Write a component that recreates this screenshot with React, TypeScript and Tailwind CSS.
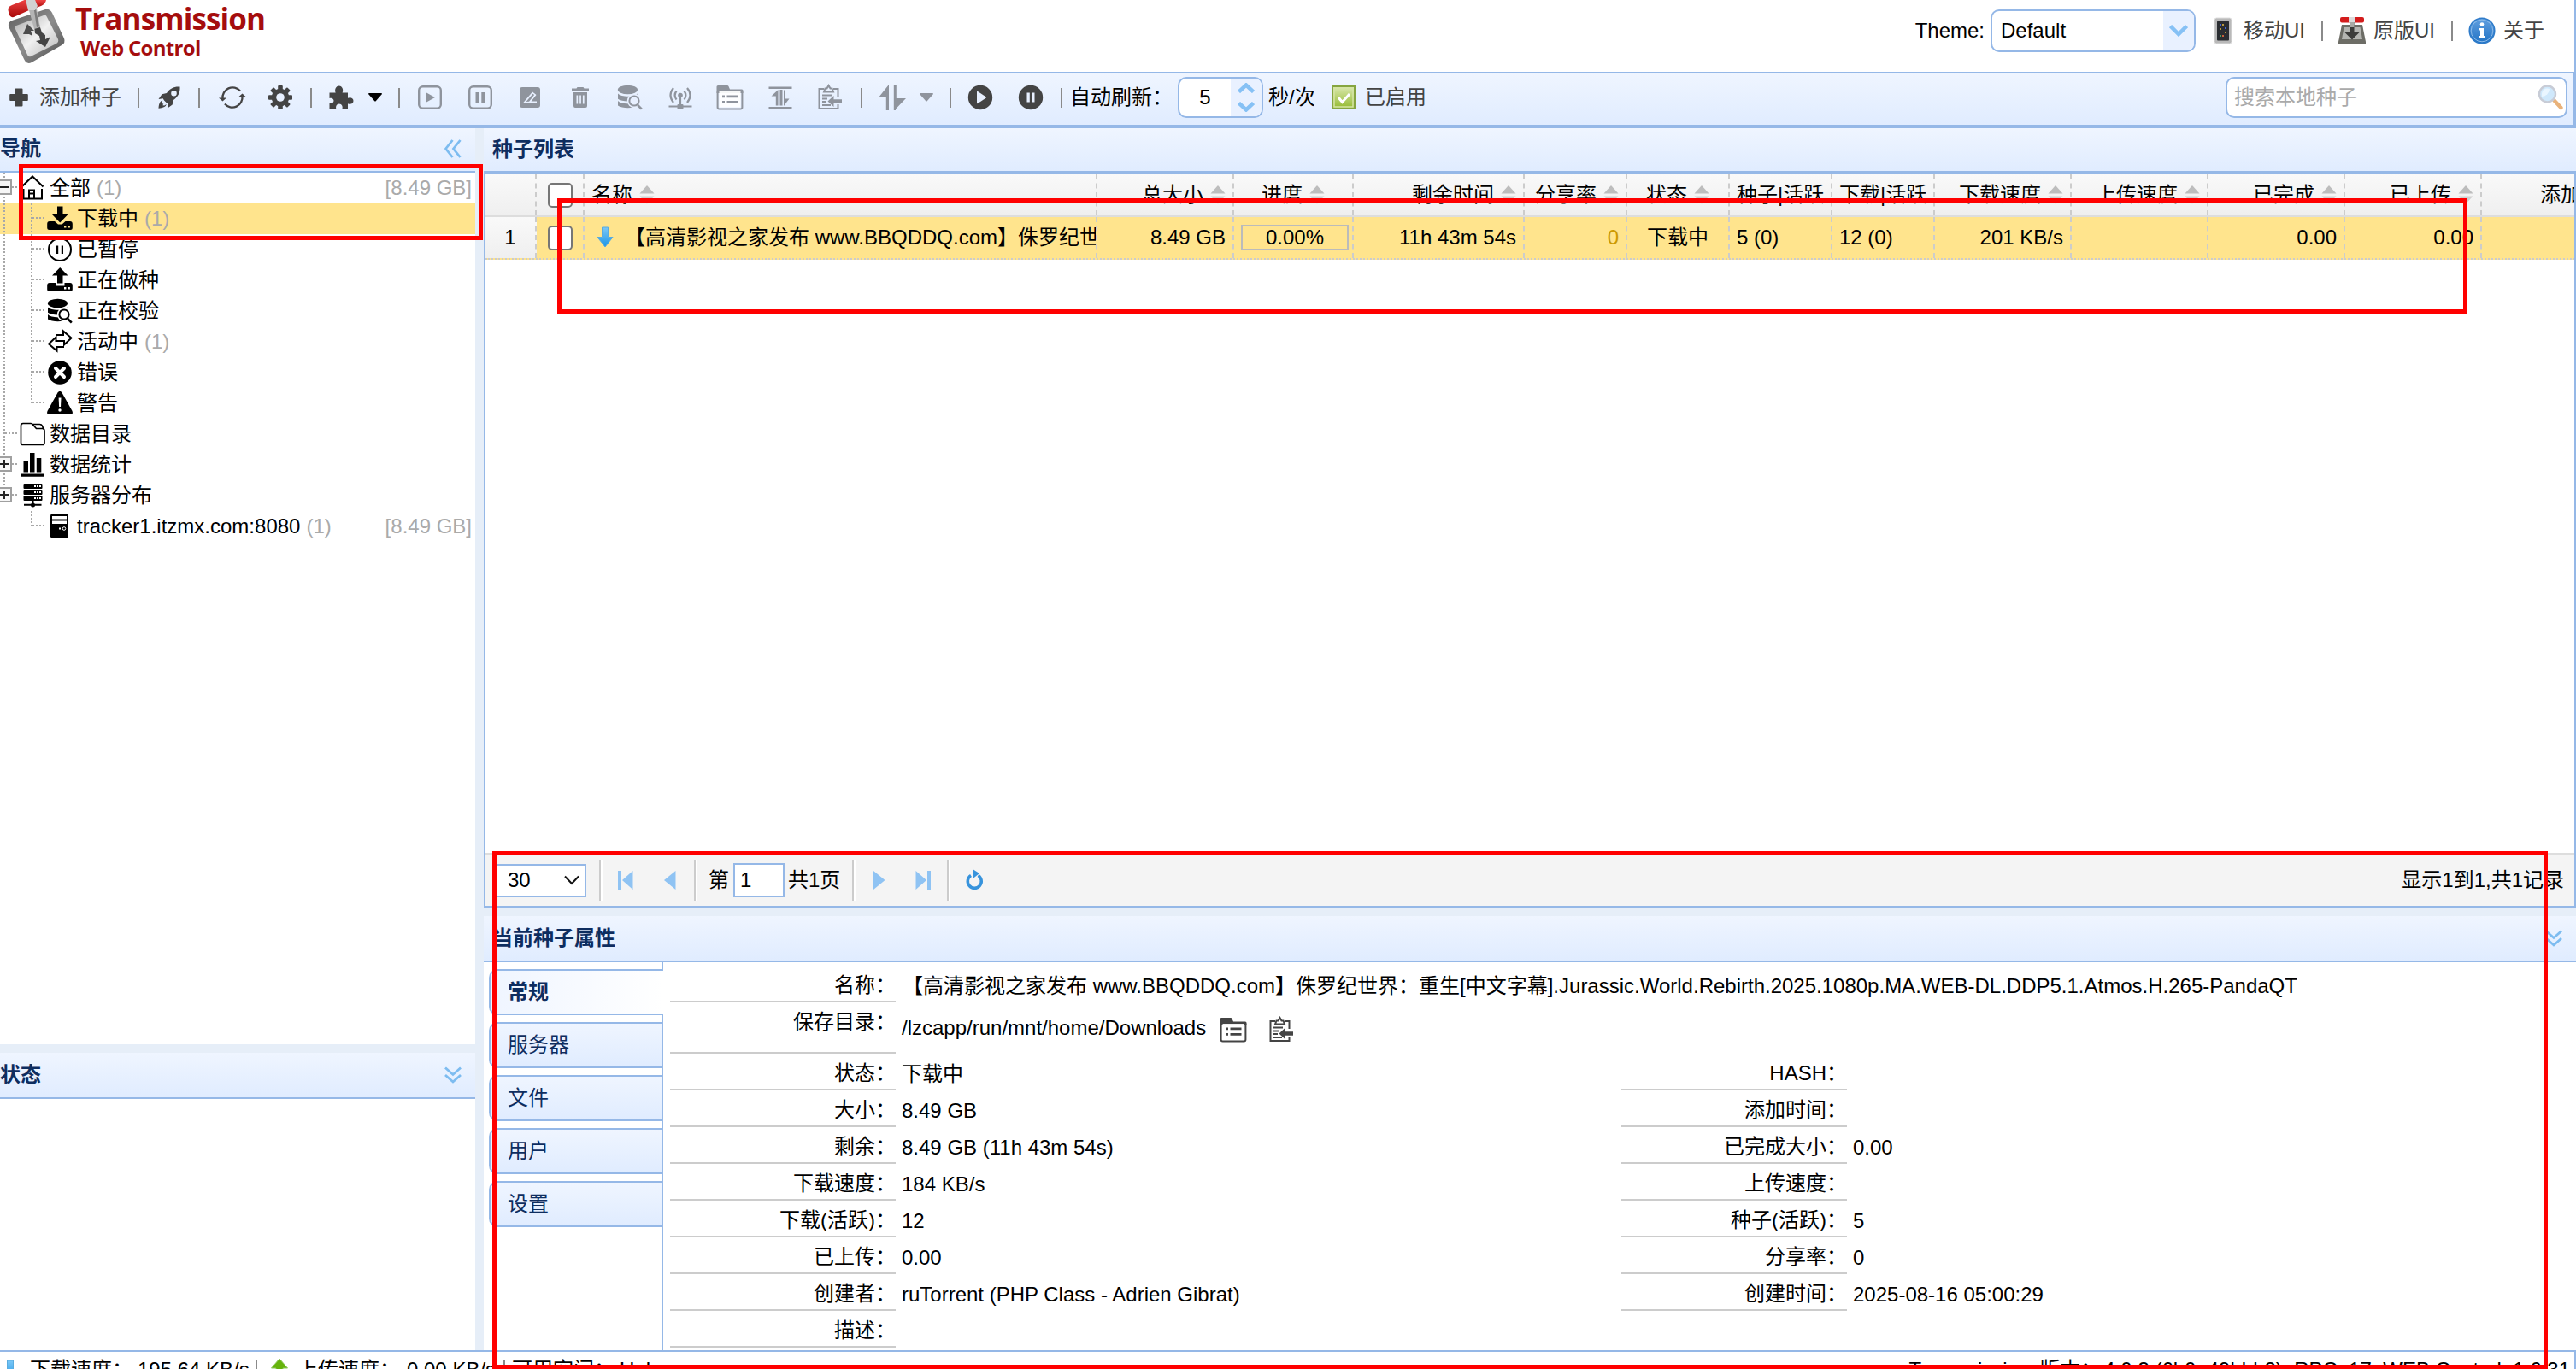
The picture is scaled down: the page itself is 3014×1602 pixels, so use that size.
import React from 'react';

type IconProps = { className?: string };

/* ---------- icons (32 x 32 grid) ---------- */

const Svg: React.FC<React.PropsWithChildren<IconProps>> = ({ className = '', children }) => (
  <svg viewBox="0 0 32 32" fill="currentColor" className={`block size-8 shrink-0 ${className}`}>
    {children}
  </svg>
);

const PlusIcon = () => (
  <Svg>
    <path d="M12.5 5.5h7a1 1 0 0 1 1 1V12h5.300a1 1 0 0 1 1 1v6a1 1 0 0 1-1 1H20.500v5.500a1 1 0 0 1-1 1h-7a1 1 0 0 1-1-1V20H6.200a1 1 0 0 1-1-1v-6a1 1 0 0 1 1-1h5.300V6.500a1 1 0 0 1 1-1z" />
  </Svg>
);

const RocketIcon = () => (
  <Svg>
    <path
      fillRule="evenodd"
      d="M28.500 3.500c-6.500-.6-12 2-15.500 7.500l-5.500 1.200L3.500 18l5.200-.8 1.300 2.200 2.600 2.600 2.300 1.300-.9 5.200 5.700-4.100 1.300-5.500c5.500-3.700 8-9 7.500-15.400zM21.500 8a3.300 3.300 0 1 1 0 6.600 3.300 3.300 0 0 1 0-6.600z"
    />
    <path d="M8.200 19.500c-3 .6-4.400 4.200-4.700 9.300 5-.3 8.600-1.700 9.200-4.700l-2.400 1.400-1.900-.3.900-2-1.900.2z" />
  </Svg>
);

const SyncIcon = () => (
  <Svg>
    <g fill="none" stroke="currentColor" strokeWidth="2.300">
      <path d="M4.500 17.500A11.700 11.700 0 0 1 25 8.500" />
      <path d="M27.500 14.500A11.700 11.700 0 0 1 7 23.500" />
    </g>
    <path d="M0 16.500h9L4.500 20.500zM32 15.500h-9l4.500-4z" />
  </Svg>
);

const GearIcon = () => (
  <Svg>
    <g>
      {[0, 45, 90, 135].map((a) => (
        <rect key={a} x="13.200" y="2" width="5.600" height="28" rx="1" transform={`rotate(${a} 16 16)`} />
      ))}
    </g>
    <circle cx="16" cy="16" r="10.300" />
    <circle cx="16" cy="16" r="4.800" fill="#e8f0ff" />
  </Svg>
);

const PuzzleIcon = () => (
  <Svg>
    <path d="M2.500 10.500h7.200c-1.500-3.400.2-8 4-8s5.500 4.600 3.900 8h6.400v6.300c2.300-1.200 6.500-.6 6.500 3.200s-4.200 4.500-6.500 3.300v6.200h-6.700c1.200-2.600-.4-6-3.400-6s-4.600 3.400-3.400 6H2.500v-7c2.600 1.200 5-.4 5-2.700s-2.400-3.900-5-2.700z" />
  </Svg>
);

const CaretDown: React.FC<IconProps> = ({ className = '' }) => (
  <svg viewBox="0 0 16 10" fill="currentColor" className={`block h-2.5 w-4 shrink-0 ${className}`}>
    <path d="M0 1Q0 0 1 0h14q1 0 1 1L8.500 9.500h-1z" />
  </svg>
);

const PlayBoxIcon = () => (
  <Svg>
    <rect x="3.200" y="3.200" width="25.600" height="25.600" rx="4.500" fill="none" stroke="currentColor" strokeWidth="2.400" />
    <path d="M12 10.500l10 5.500-10 5.500z" />
  </Svg>
);

const PauseBoxIcon = () => (
  <Svg>
    <rect x="3.200" y="3.200" width="25.600" height="25.600" rx="4.500" fill="none" stroke="currentColor" strokeWidth="2.400" />
    <path d="M10.500 10h4.200v12h-4.200zM17.300 10h4.200v12h-4.200z" />
  </Svg>
);

const EditIcon = () => (
  <Svg>
    <rect x="4" y="4" width="24" height="24" rx="3" />
    <path d="M7.500 23L19 9.500l4.500 3.500-6 7.500H24V23z" fill="#e8f0ff" />
    <path d="M11.500 21l8-9.300 1.600 1.300-6 7.700z" />
  </Svg>
);

const TrashIcon = () => (
  <Svg>
    <path d="M12.500 4h7l1 1.500H26v3H6v-3h5.500z" />
    <path fillRule="evenodd" d="M8 10h16v16q0 2-2 2H10q-2 0-2-2zm3.500 3.500v10h1.700v-10zm3.700 0v10h1.700v-10zm3.700 0v10h1.700v-10z" />
  </Svg>
);

const DbSearchIcon: React.FC<{ bg?: string }> = ({ bg = '#e8f0ff' }) => (
  <Svg>
    <ellipse cx="13.500" cy="7" rx="11.700" ry="5.200" />
    <path d="M2 11.500c4 4.300 19 4.300 23 0v6.300c-5 3.600-18 3.600-23 0z" />
    <path d="M2 20c4 4.300 19 4.300 23 0v5.500c-5 3.700-18 3.700-23 0z" />
    <circle cx="21" cy="20" r="8.200" fill={bg} />
    <circle cx="21" cy="20" r="5.600" fill="none" stroke="currentColor" strokeWidth="2" />
    <path d="M25.200 25l4.600 4.600" stroke="currentColor" strokeWidth="2.600" />
  </Svg>
);

const BroadcastIcon = () => (
  <Svg>
    <circle cx="16" cy="13.500" r="2.800" />
    <g fill="none" stroke="currentColor" strokeWidth="2.200">
      <path d="M11.500 8.500q-3.800 5 0 10M8 5q-7 8.500 0 17M20.500 8.500q3.800 5 0 10M24 5q7 8.500 0 17" />
      <path d="M16 15v11M2.500 26.500h27" />
    </g>
    <rect x="12.500" y="24" width="7" height="5.500" rx="1" />
  </Svg>
);

const FolderListIcon = () => (
  <Svg>
    <path d="M0.500 9V3.500q0-1.500 1.500-1.500h11q1 0 1.500 1l1.500 3.500h14q1.500 0 1.500 1.500v3H.5z" />
    <rect x="1.600" y="8" width="28.800" height="21.500" rx="2" fill="none" stroke="currentColor" strokeWidth="2" />
    <rect x="3.500" y="9" width="25" height="18.500" fill="#fff" fillOpacity=".92" />
    <path d="M7 13.500h3v2.800H7zM12.500 13.500h13v2.800h-13zM7 20h3v2.800H7zM12.500 20h13v2.800h-13z" />
  </Svg>
);

const MoveIcon = () => (
  <Svg>
    <path d="M2.500 3.500h27V6h-27zM2.500 27h27v2.500h-27zM13.500 7v18.500h-2.700V14.500H5.500zM18.500 25.500V7h-3v18.500zM20 7.500h1.200v10h5.300l-6.500 8.500z" />
  </Svg>
);

const ClipboardIcon = () => (
  <Svg>
    <g fill="none" stroke="currentColor" strokeWidth="2">
      <path d="M9 6H3.500v23h22v-5M25.500 15V6H20" />
      <path d="M9 9.500l1.500-4h2L14.500 2l2 3.500h2l1.500 4z" />
      <path d="M7 13.500h11M7 17.500h6M7 21h5M7 25h10" />
    </g>
    <path d="M13.500 20.500l7-6.500v4.300H30v4.500h-9.500V27z" />
  </Svg>
);

const UpDownIcon = () => (
  <Svg>
    <path d="M12 1v30H8.800V16H0zM17.800 1h3v16H32L20 29.500V31h-2.200z" />
  </Svg>
);

const PlayCircleIcon = () => (
  <Svg>
    <circle cx="16" cy="16" r="14.200" />
    <path d="M12 9.500q0-1 1-.5l9.500 6.300q1 .7 0 1.400L13 23q-1 .5-1-.5z" fill="#e8f0ff" />
  </Svg>
);

const PauseCircleIcon = () => (
  <Svg>
    <circle cx="16" cy="16" r="14.200" />
    <path d="M11.500 10.500h3.300v11h-3.300zM17.200 10.500h3.300v11h-3.300z" fill="#e8f0ff" />
  </Svg>
);

const CheckIcon = () => (
  <svg viewBox="0 0 28 28" className="block size-7 shrink-0">
    <defs>
      <linearGradient id="chk" x1="0" y1="0" x2="0" y2="1">
        <stop offset="0" stopColor="#dbe9b0" />
        <stop offset="1" stopColor="#93b92e" />
      </linearGradient>
    </defs>
    <rect x="1" y="1" width="26" height="26" fill="url(#chk)" stroke="#86a540" strokeWidth="2" />
    <rect x="3" y="3" width="22" height="22" fill="none" stroke="#d5e4a4" strokeWidth="1.500" />
    <path d="M8 14l4.500 5.500L21 10" fill="none" stroke="#fff" strokeWidth="3" />
  </svg>
);

const HomeIcon = () => (
  <Svg>
    <path d="M3.500 14.500L16 2.500l12.500 12M5.500 17v11.500H27V17M12 28V18.500h6V28M12 22.500h6" fill="none" stroke="currentColor" strokeWidth="2" />
  </Svg>
);

const DownloadIcon = () => (
  <Svg>
    <path d="M13 1.500h6.500V11h6L16.200 20.500 7 11h6z" />
    <path fillRule="evenodd" d="M4 19h6l4 3.500h4.500l4-3.500H28q2.800 0 2.800 3v4.500q0 2.500-2.500 2.500H3.700q-2.500 0-2.500-2.500V22q0-3 2.800-3zm17 5v2.400h2.400V24zm4.500 0v2.400h2.400V24z" />
  </Svg>
);

const SeedIcon = () => (
  <Svg>
    <path d="M16.200 1l9.300 9.500h-6v9H13v-9H7z" />
    <path fillRule="evenodd" d="M4 19h7v3.500h10.500V19H28q2.800 0 2.800 3v4.500q0 2.500-2.500 2.500H3.700q-2.500 0-2.500-2.500V22q0-3 2.800-3zm17 5v2.400h2.400V24zm4.500 0v2.400h2.400V24z" />
  </Svg>
);

const PausedIcon = () => (
  <Svg>
    <circle cx="16" cy="16" r="13" fill="none" stroke="currentColor" strokeWidth="2" />
    <path d="M12 11.500h2.200v9.500H12zM17.800 11.500H20v9.500h-2.200z" />
  </Svg>
);

const ActiveIcon = () => (
  <Svg>
    <path
      d="M11.500 8H20V3.500l9.500 8-8.500 8V15h-6M21 22h-8.500v4.500l-9.500-8 8.500-8V15h6"
      fill="none"
      stroke="currentColor"
      strokeWidth="2"
    />
  </Svg>
);

const ErrorIcon = () => (
  <Svg>
    <circle cx="16" cy="16" r="13.800" />
    <path d="M11 11l10 10M21 11L11 21" stroke="#fff" strokeWidth="4" strokeLinecap="round" />
  </Svg>
);

const WarningIcon = () => (
  <Svg>
    <path d="M13.500 3.500q2.500-3.500 5 0l12 21.500q1.500 4-2 4h-25q-3.500 0-2-4z" />
    <path d="M14.600 9.500h2.900l-.5 10.500h-1.900z" fill="#fff" />
    <circle cx="16" cy="24" r="1.700" fill="#fff" />
  </Svg>
);

const FolderIcon = () => (
  <Svg>
    <path d="M2.500 26V6q0-2.500 2.500-2.500h9q1.500 0 2.500 1.500l4 4.500h7q2.500 0 2.500 2.500v14q0 2.500-2.500 2.500H5q-2.500 0-2.500-2.500zM15 4.500h9.500q2 0 3 2l1.500 4" fill="none" stroke="currentColor" strokeWidth="1.700" />
  </Svg>
);

const StatsIcon = () => (
  <Svg>
    <path d="M2 26.500h28v3.200H2zM5.500 12H11v12.500H5.500zM13 2h5.500v22.500H13zM20.800 8h5.500v16.500h-5.500z" />
  </Svg>
);

const ServersIcon = () => (
  <Svg>
    {[2, 9, 16].map((y) => (
      <g key={y}>
        <rect x="5.500" y={y} width="22" height="6" rx="1" />
        <path d={`M18 ${y + 3}h2M21 ${y + 3}h2M24 ${y + 3}h2`} stroke="#fff" strokeWidth="1.800" />
      </g>
    ))}
    <path d="M6 25.800h20.500v2H6zM15.500 22h2v4h-2z" />
    <circle cx="16.500" cy="27" r="2.500" />
  </Svg>
);

const TowerIcon = () => (
  <Svg>
    <rect x="5" y="1.500" width="21" height="28" rx="2" />
    <path d="M7 4h17v3.500H7zM7 9.500h17V13H7z" fill="#fff" />
    <circle cx="21" cy="18.500" r="1.800" fill="none" stroke="#fff" strokeWidth="1" />
    <path d="M15 17.600h2v2h-2z" fill="#fff" />
  </Svg>
);

const PhoneIcon = () => (
  <svg viewBox="0 0 26 32" className="block h-8 w-[26px] shrink-0">
    <path d="M0 31h26v1H0z" fill="#d9d9d9" />
    <rect x="3" y="1" width="20" height="30" rx="2.500" fill="#b9b9b9" stroke="#dedede" strokeWidth="1" />
    <rect x="6" y="4.500" width="14" height="23" rx="1" fill="#2a2d31" />
    <path d="M9 8h2v2H9zM15 12h2v2h-2z" fill="#3f66d8" />
    <path d="M12 8h2v2h-2zM9 13h2v2H9zM15 17h2v2h-2z" fill="#b9973c" />
    <path d="M9 21h2v2H9z" fill="#4c9b5a" />
    <path d="M12 21h2v2h-2z" fill="#c6603a" />
  </svg>
);

const ClassicIcon = () => (
  <svg viewBox="0 0 32 32" className="block size-8 shrink-0">
    <path d="M4 9h24l4 20v3H0v-3z" fill="#6d6d66" />
    <path d="M6.500 12h19L28 26H4z" fill="#b4b5b1" />
    <rect x="2" y="0" width="28" height="6.500" rx="2" fill="#d31c1c" />
    <rect x="12" y="0" width="8" height="6.500" fill="#dcdcdc" />
    <path d="M13.500 6h5v12h6L16 26.500 7.500 18h6z" fill="#3c3c3a" />
    <path d="M13.500 6h5v6h-5z" fill="#a9aaa6" />
  </svg>
);

const InfoIcon = () => (
  <svg viewBox="0 0 32 32" className="block size-8 shrink-0">
    <defs>
      <linearGradient id="info" x1="0" y1="0" x2="0" y2="1">
        <stop offset="0" stopColor="#62a0e0" />
        <stop offset="1" stopColor="#2273c4" />
      </linearGradient>
    </defs>
    <circle cx="16" cy="16" r="14.800" fill="url(#info)" stroke="#2e7bc9" strokeWidth="1.500" />
    <circle cx="16" cy="16" r="12.800" fill="none" stroke="#8dbbe9" strokeWidth="1" />
    <circle cx="16" cy="8.500" r="2.300" fill="#fff" />
    <path d="M12.500 13h5.500v9h2v2.500h-8V22h2v-6.500h-1.500z" fill="#fff" />
  </svg>
);

const SearchIcon = () => (
  <svg viewBox="0 0 32 32" className="block size-8 shrink-0">
    <path d="M20.500 19.500l8 8.500" stroke="#e9b27a" strokeWidth="4.500" strokeLinecap="round" />
    <circle cx="12.500" cy="12" r="9.500" fill="#cfe8fb" stroke="#c8ccd6" strokeWidth="2.400" />
    <path d="M6 12a6.500 6.500 0 0 1 9-6 9 9 0 0 1-9 9z" fill="#eaf6ff" />
  </svg>
);

const LogoIcon = () => (
  <svg viewBox="0 0 68 76" className="block h-[76px] w-[68px] shrink-0">
    <defs>
      <linearGradient id="rim" x1="0" y1="0" x2="1" y2="1">
        <stop offset="0" stopColor="#5d5d5d" />
        <stop offset=".5" stopColor="#8d8d8d" />
        <stop offset="1" stopColor="#4c4c4c" />
      </linearGradient>
      <linearGradient id="plate" x1="0" y1="0" x2="1" y2="1">
        <stop offset="0" stopColor="#a9a9a9" />
        <stop offset=".5" stopColor="#f1f1f1" />
        <stop offset="1" stopColor="#b5b5b5" />
      </linearGradient>
      <linearGradient id="grip" x1="0" y1="0" x2="0" y2="1">
        <stop offset="0" stopColor="#f04545" />
        <stop offset="1" stopColor="#a80808" />
      </linearGradient>
    </defs>
    <path d="M5 24L44 11q5-1 8 4l14 30q2 5-3 8L28 73q-6 3-9-4L1 31q-1-5 4-7z" fill="url(#rim)" />
    <path d="M10 30l32-12q3-1 4 2l13 26q1 3-2 5L27 66q-3 1-4-2L9 34q-1-3 1-4z" fill="url(#plate)" />
    <path d="M31 30l6-1 3 9 4 3 0 5 6-3-6 12-11-7 5-1-1-5-5-3z" fill="#454545" />
    <path d="M18 40l5-12 8 8-4 0 2 6-4-2z" fill="#4c4c4c" />
    <path d="M23 3l9-3 5 2-3 8 4 22-7 2-6-22z" fill="#b4b4b4" />
    <path d="M30 6l2 0 5 25-3 1z" fill="#7c7c7c" />
    <path d="M1 14q-2-6 4-8l17-7 3 13L7 20q-5 1-6-6z" fill="url(#grip)" />
    <path d="M32 0h13q-1 5-6 7l-6 2z" fill="url(#grip)" />
    <path d="M21 0h11l3 7-3 5-8 0z" fill="#d2d2d2" />
  </svg>
);

const BlueArrow = () => (
  <svg viewBox="0 0 22 26" className="block h-[26px] w-[22px] shrink-0">
    <defs>
      <linearGradient id="blueArrow" x1="0" y1="0" x2="0" y2="1">
        <stop offset="0" stopColor="#7cc8f7" />
        <stop offset="1" stopColor="#1a94e6" />
      </linearGradient>
    </defs>
    <path d="M7.500 1h7v11.500h5.500L11 24 2 12.500h5.500z" fill="url(#blueArrow)" stroke="#5bacde" strokeWidth="1" />
  </svg>
);

const GreenArrow = () => (
  <svg viewBox="0 0 22 26" className="block h-[26px] w-[22px] shrink-0">
    <path d="M11 1l9.500 11H15v12H7V12H1.500z" fill="#66b30c" stroke="#8cc85a" strokeWidth="1" />
  </svg>
);

const SortIcon = () => (
  <svg viewBox="0 0 18 24" className="block h-6 w-[18px] shrink-0">
    <path d="M9 1l8.500 9.500H.5z" fill="#bdbdbd" />
    <path d="M.5 13.500h17L9 22.500z" fill="#d0d0d0" />
  </svg>
);

const DoubleDown = () => (
  <svg viewBox="0 0 20 20" className="block size-5" fill="none" stroke="#7dbcf0" strokeWidth="2.800">
    <path d="M1 1.500l9 8 9-8M1 10l9 8 9-8" />
  </svg>
);

const DoubleLeft = () => (
  <svg viewBox="0 0 20 22" className="block h-[22px] w-5" fill="none" stroke="#7dbcf0" strokeWidth="2.800">
    <path d="M9.500 1l-8 10 8 10M18.500 1l-8 10 8 10" />
  </svg>
);

/* ---------- shared bits ---------- */

const Sep: React.FC<IconProps> = ({ className = '' }) => (
  <div className={`h-[23px] w-0.5 shrink-0 bg-[#8a8a8a] ${className}`} />
);

const Slot: React.FC<React.PropsWithChildren<IconProps>> = ({ className = 'w-[58.5px]', children }) => (
  <button className={`flex shrink-0 items-center justify-center ${className}`}>{children}</button>
);

const PanelTitle: React.FC<React.PropsWithChildren<IconProps>> = ({ className = '', children }) => (
  <div
    className={`flex shrink-0 items-center justify-between border-[#95b8e7] bg-linear-to-b from-[#eff5ff] to-[#e0ecff] font-bold text-[#0e2d5f] ${className}`}
  >
    {children}
  </div>
);

/* ---------- header + toolbar ---------- */

const Header = () => (
  <header className="flex h-[86px] shrink-0 border-r-2 border-b-2 border-[#95b8e7] bg-white">
    <div className="flex grow pl-[9px]">
      <LogoIcon />
      <div className="ml-[11px] flex flex-col font-['Open_Sans'] font-bold whitespace-nowrap text-[#a50d0d]">
        <span className="h-[43px] text-[35px] leading-[43px] tracking-[-0.9px]">Transmission</span>
        <span className="ml-1.5 text-[24px] leading-[26px] tracking-[-0.7px]">Web Control</span>
      </div>
    </div>
    <div className="flex h-[72px] items-center pr-[35px] text-[#444]">
      <span className="mr-[7px] text-black">Theme:</span>
      <div className="mr-[19px] flex h-[50px] w-60 overflow-hidden rounded-[10px] border-2 border-[#95b8e7] bg-white text-black">
        <span className="grow pl-2.5 leading-[46px]">Default</span>
        <span className="flex w-9 items-center justify-center bg-[#e9f1ff]">
          <svg viewBox="0 0 22 14" className="h-3.5 w-[22px]" fill="none" stroke="#86c1f5" strokeWidth="4.500">
            <path d="M1.500 1.500L11 11l9.500-9.500" />
          </svg>
        </span>
      </div>
      <PhoneIcon />
      <span className="ml-[11px]">移动UI</span>
      <Sep className="mr-[18px] ml-[19px]" />
      <ClassicIcon />
      <span className="ml-[9px]">原版UI</span>
      <Sep className="mr-[18px] ml-[19px]" />
      <InfoIcon />
      <span className="ml-[9px]">关于</span>
    </div>
  </header>
);

const Toolbar = () => (
  <div className="flex h-16 shrink-0 items-center border-r-4 border-b-4 border-[#95b8e7] bg-linear-to-b from-[#eff5ff] to-[#e0ecff] pb-1 text-[#444]">
    <button className="ml-1.5 flex items-center gap-2">
      <PlusIcon />
      <span>添加种子</span>
    </button>
    <Sep className="ml-[19px]" />
    <Slot className="w-[69px]"><RocketIcon /></Slot>
    <Sep />
    <Slot className="ml-[9.5px] w-14"><SyncIcon /></Slot>
    <Slot className="mr-[7.5px] w-14"><GearIcon /></Slot>
    <Sep />
    <Slot className="ml-1.5 w-14"><PuzzleIcon /></Slot>
    <CaretDown className="ml-1 text-black" />
    <Sep className="ml-[19px]" />
    <div className="mr-[6.5px] ml-1.5 flex items-center text-[#8f949d]">
      <Slot><PlayBoxIcon /></Slot>
      <Slot><PauseBoxIcon /></Slot>
      <Slot><EditIcon /></Slot>
      <Slot><TrashIcon /></Slot>
      <Slot><DbSearchIcon /></Slot>
      <Slot><BroadcastIcon /></Slot>
      <Slot><FolderListIcon /></Slot>
      <Slot><MoveIcon /></Slot>
      <Slot><ClipboardIcon /></Slot>
    </div>
    <Sep />
    <div className="ml-[19px] flex items-center gap-4 text-[#8f949d]">
      <UpDownIcon />
      <CaretDown />
    </div>
    <Sep className="mr-[5px] ml-[19px]" />
    <Slot><PlayCircleIcon /></Slot>
    <Slot><PauseCircleIcon /></Slot>
    <Sep className="ml-1.5" />
    <span className="ml-[9px] w-[126px] shrink-0 text-black">自动刷新：</span>
    <div className="flex h-12 w-[100px] shrink-0 overflow-hidden rounded-[10px] border-2 border-[#95b8e7] bg-white text-black">
      <input className="w-[60px] text-center outline-none" value="5" readOnly />
      <div className="flex grow flex-col items-center justify-between bg-[#e9f1ff] py-[5px]">
        <svg viewBox="0 0 20 12" className="h-3 w-5" fill="none" stroke="#86c1f5" strokeWidth="4.500">
          <path d="M1.500 10.500L10 2.500l8.500 8" />
        </svg>
        <svg viewBox="0 0 20 12" className="h-3 w-5" fill="none" stroke="#86c1f5" strokeWidth="4.500">
          <path d="M1.500 1.500l8.500 8 8.500-8" />
        </svg>
      </div>
    </div>
    <span className="ml-1.5 w-[74px] shrink-0 text-black">秒/次</span>
    <CheckIcon />
    <span className="ml-[11px]">已启用</span>
    <div className="mr-1.5 ml-auto flex h-12 w-[400px] items-center justify-between rounded-[10px] border-2 border-[#95b8e7] bg-white pr-[2px] pl-2 text-[#aaa]">
      <span>搜索本地种子</span>
      <SearchIcon />
    </div>
  </div>
);

/* ---------- navigation tree ---------- */

type Line = 'none' | 'v' | 'tee' | 'end' | 'minus' | 'plus' | 'plusEnd';

const TreeLine: React.FC<{ kind: Line }> = ({ kind }) => {
  const box = kind === 'minus' || kind === 'plus' || kind === 'plusEnd';
  const full = kind === 'v' || kind === 'tee' || kind === 'minus' || kind === 'plus';
  return (
    <svg viewBox="0 0 32 36" className="block h-9 w-8 shrink-0" fill="none">
      <g stroke="#a8a8a8" strokeWidth="2" strokeDasharray="2 2">
        {full && <path d="M15 0v36" />}
        {(kind === 'end' || kind === 'plusEnd') && <path d="M15 0v18" />}
        {kind !== 'none' && kind !== 'v' && <path d="M16 17h16" />}
      </g>
      {box && (
        <>
          <rect x="7" y="9" width="16" height="16" fill="#f6f6f6" stroke="#a0a0a0" strokeWidth="2" />
          <path d="M10 17h10" stroke="#222" strokeWidth="2" />
          {kind !== 'minus' && <path d="M15 12v10" stroke="#222" strokeWidth="2" />}
        </>
      )}
    </svg>
  );
};

type Node = {
  lines: Line[];
  icon: React.ReactNode;
  text: string;
  count?: number;
  size?: string;
  active?: boolean;
};

const nodes: Node[] = [
  { lines: ['minus'], icon: <HomeIcon />, text: '全部', count: 1, size: '[8.49 GB]' },
  { lines: ['v', 'tee'], icon: <DownloadIcon />, text: '下载中', count: 1, active: true },
  { lines: ['v', 'tee'], icon: <PausedIcon />, text: '已暂停' },
  { lines: ['v', 'tee'], icon: <SeedIcon />, text: '正在做种' },
  { lines: ['v', 'tee'], icon: <DbSearchIcon bg="#fff" />, text: '正在校验' },
  { lines: ['v', 'tee'], icon: <ActiveIcon />, text: '活动中', count: 1 },
  { lines: ['v', 'tee'], icon: <ErrorIcon />, text: '错误' },
  { lines: ['v', 'end'], icon: <WarningIcon />, text: '警告' },
  { lines: ['tee'], icon: <FolderIcon />, text: '数据目录' },
  { lines: ['plus'], icon: <StatsIcon />, text: '数据统计' },
  { lines: ['plusEnd'], icon: <ServersIcon />, text: '服务器分布' },
  { lines: ['none', 'end'], icon: <TowerIcon />, text: 'tracker1.itzmx.com:8080', count: 1, size: '[8.49 GB]' },
];

const Sidebar = () => (
  <aside className="flex w-[556px] shrink-0 flex-col overflow-hidden">
    <PanelTitle className="h-[52px] border-b-2 pr-4 pb-0.5">
      <span>导航</span>
      <DoubleLeft />
    </PanelTitle>
    <div className="h-[1020px] shrink-0 overflow-hidden bg-white">
      {nodes.map((n) => (
        <div key={n.text} className={`flex h-9 items-center ${n.active ? 'bg-[#ffe48d]' : ''}`}>
          <div className="-ml-2.5 flex shrink-0 items-center">
            {n.lines.map((k, i) => (
              <TreeLine key={i} kind={k} />
            ))}
            {n.icon}
          </div>
          <span className="ml-1">{n.text}</span>
          {n.count && <span className="ml-[7px] text-[#aaa]">({n.count})</span>}
          {n.size && <span className="mr-1 ml-auto text-[#aaa]">{n.size}</span>}
        </div>
      ))}
    </div>
    <div className="h-2.5 shrink-0 bg-[#e6eef8]" />
    <PanelTitle className="h-[54px] border-b-2 pr-4">
      <span>状态</span>
      <DoubleDown />
    </PanelTitle>
    <div className="grow bg-white" />
  </aside>
);

/* ---------- torrent grid ---------- */

type Column = { title: string; width: string; align: string; sort?: boolean; cell?: React.ReactNode };

const columns: Column[] = [
  {
    title: '名称',
    width: 'w-[600px]',
    align: 'justify-start',
    sort: true,
    cell: (
      <>
        <span className="ml-[5px]"><BlueArrow /></span>
        <span className="ml-3">【高清影视之家发布 www.BBQDDQ.com】侏罗纪世</span>
      </>
    ),
  },
  { title: '总大小', width: 'w-[160px]', align: 'justify-end', sort: true, cell: '8.49 GB' },
  {
    title: '进度',
    width: 'w-[140px]',
    align: 'justify-center',
    sort: true,
    cell: <span className="-mr-[3px] ml-px h-[30px] w-[126px] shrink-0 border-2 border-[#bbb] text-center leading-[25px]">0.00%</span>,
  },
  { title: '剩余时间', width: 'w-[200px]', align: 'justify-end', sort: true, cell: '11h 43m 54s' },
  { title: '分享率', width: 'w-[120px]', align: 'justify-end', sort: true, cell: <span className="text-[#cc9900]">0</span> },
  { title: '状态', width: 'w-[120px]', align: 'justify-center', sort: true, cell: '下载中' },
  { title: '种子|活跃', width: 'w-[120px]', align: 'justify-start', cell: '5 (0)' },
  { title: '下载|活跃', width: 'w-[120px]', align: 'justify-start', cell: '12 (0)' },
  { title: '下载速度', width: 'w-[160px]', align: 'justify-end', sort: true, cell: '201 KB/s' },
  { title: '上传速度', width: 'w-[160px]', align: 'justify-end', sort: true },
  { title: '已完成', width: 'w-[160px]', align: 'justify-end', sort: true, cell: '0.00' },
  { title: '已上传', width: 'w-[160px]', align: 'justify-end', sort: true, cell: '0.00' },
  { title: '添加时间', width: 'w-[260px]', align: 'justify-center', sort: true },
];

const cellBase = 'flex shrink-0 items-center overflow-hidden whitespace-nowrap border-r-2 border-dashed border-[#ccc]';

const Checkbox = () => <span className="size-[29px] shrink-0 rounded-[5px] border-2 border-[#767676] bg-white" />;

const TorrentGrid = () => (
  <>
    <div className="flex h-[50px] shrink-0 overflow-hidden border-b-2 border-[#ddd] bg-linear-to-b from-[#f9f9f9] to-[#efefef]">
      <div className={`${cellBase} w-[60px]`} />
      <div className={`${cellBase} w-14 justify-center`}><Checkbox /></div>
      {columns.map((c) => (
        <div key={c.title} className={`${cellBase} px-2 ${c.width} ${c.align}`}>
          <span>{c.title}</span>
          {c.sort && <span className="ml-2"><SortIcon /></span>}
        </div>
      ))}
    </div>
    <div className="flex h-[50px] shrink-0 overflow-hidden border-b-2 border-dotted border-[#ccc] bg-[#ffe48d]">
      <div className={`${cellBase} w-[60px] justify-center bg-linear-to-b from-[#f9f9f9] to-[#efefef]`}>1</div>
      <div className={`${cellBase} w-14 justify-center`}><Checkbox /></div>
      {columns.map((c) => (
        <div key={c.title} className={`${cellBase} ${c.title === '名称' ? 'pl-2' : 'px-2'} ${c.width} ${c.align}`}>
          {c.cell}
        </div>
      ))}
    </div>
    <div className="grow" />
  </>
);

const PagerSep: React.FC<IconProps> = ({ className = '' }) => (
  <div className={`h-12 w-1 shrink-0 border-r-2 border-l-2 border-r-white border-l-[#ccc] ${className}`} />
);

const Pager = () => (
  <div className="flex h-16 shrink-0 items-center border-t-2 border-b-2 border-t-[#ddd] border-b-[#95b8e7] bg-[#f4f4f4] pr-3 whitespace-nowrap">
    <div className="ml-3 flex h-[39px] w-[106px] items-center justify-between border-2 border-[#95b8e7] bg-white pr-1.5 pl-3">
      <span>30</span>
      <svg viewBox="0 0 18 12" className="h-3 w-[18px]" fill="none" stroke="#111" strokeWidth="2">
        <path d="M1 1.500l8 8.500 8-8.500" />
      </svg>
    </div>
    <PagerSep className="ml-[15px]" />
    <svg viewBox="0 0 18 22" className="ml-[18px] h-[22px] w-[18px]" fill="#8fc3f3">
      <path d="M0 0h4v22H0zM17.500 0v22L5 11z" />
    </svg>
    <svg viewBox="0 0 14 22" className="ml-9 h-[22px] w-3.5" fill="#8fc3f3">
      <path d="M13.500 0v22L0 11z" />
    </svg>
    <PagerSep className="mr-[13px] ml-[21px]" />
    <span>第</span>
    <input className="ml-[5px] h-10 w-[60px] border-2 border-[#95b8e7] bg-white pl-1.5 outline-none" value="1" readOnly />
    <span className="ml-1">共1页</span>
    <PagerSep className="ml-3.5" />
    <svg viewBox="0 0 14 22" className="ml-[21px] h-[22px] w-3.5" fill="#8fc3f3">
      <path d="M0 0v22l13.500-11z" />
    </svg>
    <svg viewBox="0 0 18 22" className="ml-[35px] h-[22px] w-[18px]" fill="#8fc3f3">
      <path d="M14 0h4v22h-4zM.5 0v22L13 11z" />
    </svg>
    <PagerSep className="ml-[19px]" />
    <svg viewBox="0 0 22 26" className="ml-[17px] h-[26px] w-[22px]" fill="none" stroke="#3793dc" strokeWidth="3.500">
      <path d="M7 7.500A8 8 0 1 0 15.500 7.500" />
      <path d="M9 0l8 5-7.500 6z" fill="#3793dc" stroke="none" />
    </svg>
    <span className="ml-auto">显示1到1,共1记录</span>
  </div>
);

/* ---------- torrent attributes ---------- */

const tabs = ['常规', '服务器', '文件', '用户', '设置'];

type Pair = { label: string; value?: React.ReactNode };

const rows: [Pair, Pair?][] = [
  [{ label: '状态', value: '下载中' }, { label: 'HASH' }],
  [{ label: '大小', value: '8.49 GB' }, { label: '添加时间' }],
  [{ label: '剩余', value: '8.49 GB (11h 43m 54s)' }, { label: '已完成大小', value: '0.00' }],
  [{ label: '下载速度', value: '184 KB/s' }, { label: '上传速度' }],
  [{ label: '下载(活跃)', value: '12' }, { label: '种子(活跃)', value: '5' }],
  [{ label: '已上传', value: '0.00' }, { label: '分享率', value: '0' }],
  [{ label: '创建者', value: 'ruTorrent (PHP Class - Adrien Gibrat)' }, { label: '创建时间', value: '2025-08-16 05:00:29' }],
  [{ label: '描述' }],
];

const Label: React.FC<{ text: string; className?: string }> = ({ text, className = 'h-[43px]' }) => (
  <div className={`w-[264px] shrink-0 border-b-2 border-[#ccc] text-right leading-[45px] ${className}`}>{text}：</div>
);

const Attributes = () => (
  <div className="flex min-h-0 grow overflow-hidden bg-white">
    <div className="flex w-[210px] shrink-0 flex-col pl-1.5">
      <div className="h-2 shrink-0 border-r-2 border-[#95b8e7]" />
      {tabs.map((t, i) => (
        <React.Fragment key={t}>
          <div
            className={`h-[54px] shrink-0 rounded-l-[10px] border-y-2 border-l-2 border-[#95b8e7] pl-5 leading-[50px] text-[#0e2d5f] ${
              i === 0 ? 'bg-linear-to-r from-[#eff5ff] to-white font-bold' : 'border-r-2 bg-linear-to-b from-[#eff5ff] to-[#e0ecff]'
            }`}
          >
            {t}
          </div>
          <div className="h-2 shrink-0 border-r-2 border-[#95b8e7]" />
        </React.Fragment>
      ))}
      <div className="grow border-r-2 border-[#95b8e7]" />
    </div>
    <div className="flex grow flex-col pt-1 pl-2 whitespace-nowrap">
      <div className="flex h-[43px] shrink-0">
        <Label text="名称" />
        <span className="ml-2 leading-[47px]">
          【高清影视之家发布 www.BBQDDQ.com】侏罗纪世界：重生[中文字幕].Jurassic.World.Rebirth.2025.1080p.MA.WEB-DL.DDP5.1.Atmos.H.265-PandaQT
        </span>
      </div>
      <div className="flex h-[60px] shrink-0">
        <Label text="保存目录" className="h-[60px]" />
        <span className="ml-[7px] leading-[60px]">/lzcapp/run/mnt/home/Downloads</span>
        <div className="mt-4 ml-4 flex gap-6 text-[#444]">
          <FolderListIcon />
          <ClipboardIcon />
        </div>
      </div>
      {rows.map(([a, b]) => (
        <div key={a.label} className="flex h-[43px] shrink-0">
          <Label text={a.label} />
          <span className="ml-[7px] w-[842px] leading-[47px]">{a.value}</span>
          {b && <Label text={b.label} />}
          {b && <span className="ml-[7px] leading-[47px]">{b.value}</span>}
        </div>
      ))}
    </div>
  </div>
);

const StatusBar = () => (
  <footer className="flex h-[22px] shrink-0 items-start overflow-hidden border-t-2 border-r-2 border-[#95b8e7] bg-white leading-[41px] whitespace-nowrap">
    <span className="mt-[9px] ml-px"><BlueArrow /></span>
    <span className="ml-3 w-[126px]">下载速度：</span>
    <span className="w-[138px]">195.64 KB/s</span>
    <Sep className="mt-[10px] mr-[15px]" />
    <span className="mt-[7px]"><GreenArrow /></span>
    <span className="ml-2.5 w-[128px]">上传速度：</span>
    <span className="w-[113px]">0.00 KB/s</span>
    <Sep className="mt-[10px] mr-2" />
    <span className="w-[126px]">可用空间：</span>
    <span>Unknown</span>
    <span className="mr-1.5 ml-auto">Transmission</span>
    <span className="ml-[5px]">版本：</span>
    <span className="ml-[3px] mr-[5px]">4.0.3 (6b0e49bbb2), RPC: 17, WEB Control: 1.6.31</span>
  </footer>
);

const App: React.FC = () => (
  <div className="relative flex h-[1602px] w-[3014px] flex-col overflow-hidden bg-[#e6eef8] font-['Liberation_Sans','Noto_Sans_CJK_SC',sans-serif] text-[24px] leading-[32px] text-black">
    <Header />
    <Toolbar />
    <div className="flex h-[1430px] shrink-0">
      <Sidebar />
      <main className="ml-2.5 flex min-w-0 grow flex-col">
        <PanelTitle className="h-[54px] border-b-4 pl-2.5">
          <span>种子列表</span>
        </PanelTitle>
        <section className="flex h-[858px] shrink-0 flex-col overflow-hidden border-r-2 border-l-2 border-[#95b8e7] bg-white">
          <TorrentGrid />
          <Pager />
        </section>
        <PanelTitle className="mt-2.5 h-[54px] border-b-2 pr-4 pl-2.5">
          <span>当前种子属性</span>
          <DoubleDown />
        </PanelTitle>
        <Attributes />
      </main>
    </div>
    <StatusBar />

    {/* highlight frames */}
    <div className="pointer-events-none absolute top-[192px] left-[22px] h-[89px] w-[543px] border-[5px] border-[#ff0000]" />
    <div className="pointer-events-none absolute top-[232px] left-[652px] h-[135px] w-[2235px] border-[5px] border-[#ff0000]" />
    <div className="pointer-events-none absolute top-[996px] left-[576px] h-[606px] w-[2405px] border-[5px] border-[#ff0000]" />
  </div>
);

export default App;
